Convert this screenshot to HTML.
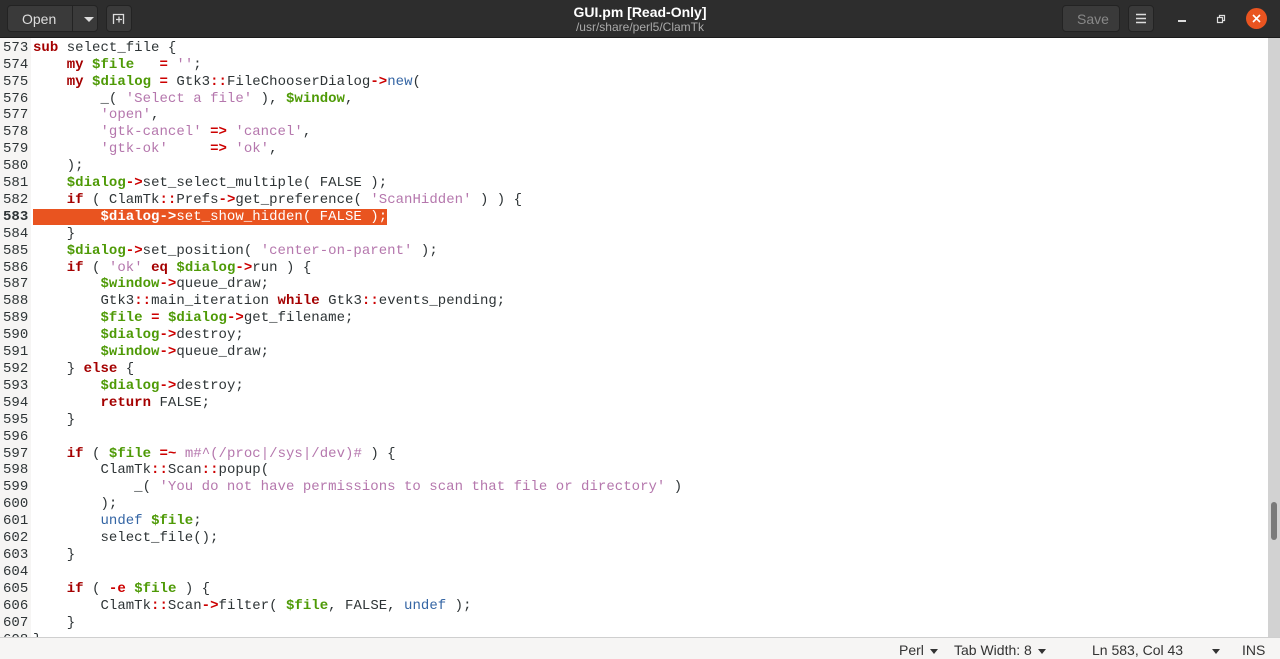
<!DOCTYPE html>
<html><head><meta charset="utf-8"><style>
*{margin:0;padding:0;box-sizing:border-box}
body{width:1280px;height:659px;overflow:hidden;background:#fff;font-family:"Liberation Sans",sans-serif;position:relative}
#hb{position:absolute;left:0;top:0;width:1280px;height:38px;background:#2d2d2d;border-bottom:1px solid #1b1b1b}
.btn{position:absolute;background:#3a3a3a;border:1px solid #232323;border-radius:4px;color:#ddd;font-size:14px}
#title{position:absolute;left:0;width:1280px;top:4px;text-align:center;color:#fff;font-weight:bold;font-size:14px}
#sub{position:absolute;left:0;width:1280px;top:20px;text-align:center;color:#aaa;font-size:12px}
#gut{position:absolute;left:0;top:38px;width:31px;height:599px;background:#f6f5f4}
#code{position:absolute;left:0;top:39.8px;font-family:"Liberation Mono",monospace;font-size:14px;line-height:16.91px;color:#2e3436;white-space:pre;letter-spacing:0.03px}
.n{display:inline-block;width:33px;padding-left:3px;color:#2e3436}
.k{color:#a40000;font-weight:bold}
.v{color:#4e9a06;font-weight:bold}
.o{color:#cc0000;font-weight:bold}
.s{color:#b577ad}
.b{color:#3465a4}
.hl{background:#e95420;color:#fff}
#sb{position:absolute;left:1268px;top:38px;width:12px;height:599px;background:#d2d2d2}
#th{position:absolute;left:1271px;top:502px;width:6px;height:38px;background:#7a7a7a;border-radius:3px}
#st{position:absolute;left:0;top:637px;width:1280px;height:22px;background:#f6f5f4;border-top:1px solid #cfcfcf;font-size:14px;color:#333}
#st span{position:absolute;top:4px}
.tri{display:inline-block;width:0;height:0;border-left:4.5px solid transparent;border-right:4.5px solid transparent;border-top:5px solid #333;vertical-align:middle;margin-left:6px}
</style></head><body>
<div id="hb">
<div class="btn" style="left:7px;top:5px;width:91px;height:27px"><span style="position:absolute;left:14px;top:5px">Open</span><div style="position:absolute;left:64px;top:0;width:1px;height:25px;background:#232323"></div><div style="position:absolute;left:76px;top:11px;border-left:5px solid transparent;border-right:5px solid transparent;border-top:5px solid #ddd"></div></div>
<div class="btn" style="left:106px;top:5px;width:26px;height:27px"><svg width="24" height="25" viewBox="0 0 24 25"><path d="M6.5 18V8.5h10V18M9 13.5h6M12 10.5v6" stroke="#ddd" stroke-width="1.3" fill="none"/></svg></div>
<div id="title">GUI.pm [Read-Only]</div>
<div id="sub">/usr/share/perl5/ClamTk</div>
<div class="btn" style="left:1062px;top:5px;width:58px;height:27px;color:#888"><span style="position:absolute;left:14px;top:5px">Save</span></div>
<div class="btn" style="left:1128px;top:5px;width:26px;height:27px"><svg width="24" height="25"><path d="M7 8.5h10M7 12.5h10M7 16.5h10" stroke="#ddd" stroke-width="1.4"/></svg></div>
<div style="position:absolute;left:1178px;top:20px;width:8px;height:2px;background:#ddd"></div>
<svg style="position:absolute;left:1214px;top:13px" width="12" height="12"><path d="M3.5 4.5h5v5h-5z M5.5 4.5V2.5h5v5h-2" stroke="#ddd" stroke-width="1.2" fill="none"/></svg>
<div style="position:absolute;left:1246px;top:8px;width:21px;height:21px;border-radius:50%;background:#e95420"></div>
<svg style="position:absolute;left:1246px;top:8px" width="21" height="21"><path d="M7 7l7 7M14 7l-7 7" stroke="#fff" stroke-width="1.6"/></svg>
</div>
<div id="gut"></div>
<div id="code"><span class="n">573</span><span class="k">sub</span> select_file {
<span class="n">574</span>    <span class="k">my</span> <span class="v">$file</span>   <span class="o">=</span> <span class="s">''</span>;
<span class="n">575</span>    <span class="k">my</span> <span class="v">$dialog</span> <span class="o">=</span> Gtk3<span class="o">::</span>FileChooserDialog<span class="o">-&gt;</span><span class="b">new</span>(
<span class="n">576</span>        _( <span class="s">'Select a file'</span> ), <span class="v">$window</span>,
<span class="n">577</span>        <span class="s">'open'</span>,
<span class="n">578</span>        <span class="s">'gtk-cancel'</span> <span class="o">=&gt;</span> <span class="s">'cancel'</span>,
<span class="n">579</span>        <span class="s">'gtk-ok'</span>     <span class="o">=&gt;</span> <span class="s">'ok'</span>,
<span class="n">580</span>    );
<span class="n">581</span>    <span class="v">$dialog</span><span class="o">-&gt;</span>set_select_multiple( FALSE );
<span class="n">582</span>    <span class="k">if</span> ( ClamTk<span class="o">::</span>Prefs<span class="o">-&gt;</span>get_preference( <span class="s">'ScanHidden'</span> ) ) {
<span class="n" style="font-weight:bold">583</span><span class="hl">        <b>$dialog-&gt;</b>set_show_hidden( FALSE );</span>
<span class="n">584</span>    }
<span class="n">585</span>    <span class="v">$dialog</span><span class="o">-&gt;</span>set_position( <span class="s">'center-on-parent'</span> );
<span class="n">586</span>    <span class="k">if</span> ( <span class="s">'ok'</span> <span class="k">eq</span> <span class="v">$dialog</span><span class="o">-&gt;</span>run ) {
<span class="n">587</span>        <span class="v">$window</span><span class="o">-&gt;</span>queue_draw;
<span class="n">588</span>        Gtk3<span class="o">::</span>main_iteration <span class="k">while</span> Gtk3<span class="o">::</span>events_pending;
<span class="n">589</span>        <span class="v">$file</span> <span class="o">=</span> <span class="v">$dialog</span><span class="o">-&gt;</span>get_filename;
<span class="n">590</span>        <span class="v">$dialog</span><span class="o">-&gt;</span>destroy;
<span class="n">591</span>        <span class="v">$window</span><span class="o">-&gt;</span>queue_draw;
<span class="n">592</span>    } <span class="k">else</span> {
<span class="n">593</span>        <span class="v">$dialog</span><span class="o">-&gt;</span>destroy;
<span class="n">594</span>        <span class="k">return</span> FALSE;
<span class="n">595</span>    }
<span class="n">596</span>
<span class="n">597</span>    <span class="k">if</span> ( <span class="v">$file</span> <span class="o">=~</span> <span class="s">m#^(/proc|/sys|/dev)#</span> ) {
<span class="n">598</span>        ClamTk<span class="o">::</span>Scan<span class="o">::</span>popup(
<span class="n">599</span>            _( <span class="s">'You do not have permissions to scan that file or directory'</span> )
<span class="n">600</span>        );
<span class="n">601</span>        <span class="b">undef</span> <span class="v">$file</span>;
<span class="n">602</span>        select_file();
<span class="n">603</span>    }
<span class="n">604</span>
<span class="n">605</span>    <span class="k">if</span> ( <span class="o">-e</span> <span class="v">$file</span> ) {
<span class="n">606</span>        ClamTk<span class="o">::</span>Scan<span class="o">-&gt;</span>filter( <span class="v">$file</span>, FALSE, <span class="b">undef</span> );
<span class="n">607</span>    }
<span class="n">608</span>}
</div>
<div id="sb"></div><div id="th"></div>
<div id="st">
<span style="left:899px">Perl<i class="tri"></i></span>
<span style="left:954px">Tab Width: 8<i class="tri"></i></span>
<span style="left:1092px">Ln 583, Col 43</span>
<span style="left:1206px"><i class="tri"></i></span>
<span style="left:1242px">INS</span>
</div>
</body></html>
